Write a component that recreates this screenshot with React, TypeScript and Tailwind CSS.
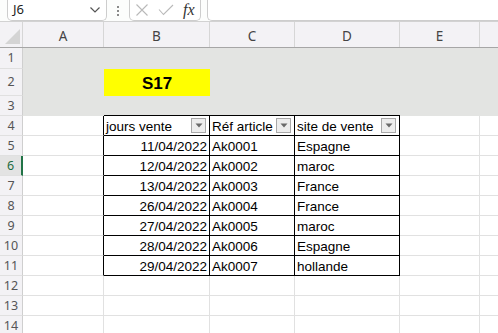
import React from "react";

const COLS = [81, 106, 85, 105, 80];
const LETTERS = ["A", "B", "C", "D", "E", ""];

const data = [
  ["11/04/2022", "Ak0001", "Espagne"],
  ["12/04/2022", "Ak0002", "maroc"],
  ["13/04/2022", "Ak0003", "France"],
  ["26/04/2022", "Ak0004", "France"],
  ["27/04/2022", "Ak0005", "maroc"],
  ["28/04/2022", "Ak0006", "Espagne"],
  ["29/04/2022", "Ak0007", "hollande"],
];

const cellFont = { fontFamily: '"Liberation Sans", Arial, sans-serif' };
const uiFont = { fontFamily: '"Noto Sans", "Open Sans", sans-serif' };

function FilterBtn() {
  return (
    <div className="absolute right-[3px] top-[2px] w-[15px] h-[15px] border border-[#a9a9a9] bg-[#ededed] flex items-center justify-center">
      <svg width="8" height="5" viewBox="0 0 8 5">
        <path d="M0.5 0.5 L7.5 0.5 L4 4.5 Z" fill="#6a6a6a" />
      </svg>
    </div>
  );
}

function RowHeader({ n, h, selected }: { n: number; h: number; selected?: boolean }) {
  return (
    <div
      className={
        "w-[23px] shrink-0 flex items-center justify-center text-[12.5px] pt-[1px] border-b border-[#e0e0e0] " +
        (selected
          ? "bg-[#e3e3e3] text-[#1d6b3e] border-r-2 border-r-[#217346]"
          : "bg-[#f3f2f5] text-[#555] border-r border-r-[#cfcfcf]")
      }
      style={{ ...uiFont, height: h }}
    >
      {n}
    </div>
  );
}

export default function App() {
  const rows: React.ReactNode[] = [];

  const grayRows = [
    { n: 1, h: 21 },
    { n: 2, h: 27 },
    { n: 3, h: 20 },
  ];
  grayRows.forEach(({ n, h }) => {
    rows.push(
      <div key={"r" + n} className="flex" style={{ height: h }}>
        <RowHeader n={n} h={h} />
        {COLS.map((w, ci) => {
          const isTableTop = n === 3 && ci >= 1 && ci <= 3;
          if (n === 2 && ci === 1) {
            return (
              <div
                key={ci}
                className="shrink-0 bg-[#ffff00] flex items-center justify-center font-bold text-[17px] text-black pt-[2px]"
                style={{ width: w, ...cellFont }}
              >
                S17
              </div>
            );
          }
          return (
            <div
              key={ci}
              className={"shrink-0 bg-[#e3e4e2] " + (isTableTop ? "border-b border-black" : "")}
              style={{ width: w }}
            />
          );
        })}
        <div className="flex-1 bg-[#e3e4e2]" />
      </div>
    );
  });

  const headers = ["jours vente", "Réf article", "site de vente"];
  rows.push(
    <div key="r4" className="flex h-[20px]">
      <RowHeader n={4} h={20} />
      {COLS.map((w, ci) => {
        const inTable = ci >= 1 && ci <= 3;
        const leftOfTable = ci === 0;
        return (
          <div
            key={ci}
            className={
              "shrink-0 relative bg-white border-b border-r text-[13.5px] text-black flex items-center pl-[2px] pt-[2px] " +
              (inTable ? "border-black" : leftOfTable ? "border-b-[#e1e1e1] border-r-black" : "border-[#e1e1e1]")
            }
            style={{ width: w, ...cellFont }}
          >
            {inTable ? (
              <>
                <span className="leading-none">{headers[ci - 1]}</span>
                <FilterBtn />
              </>
            ) : null}
          </div>
        );
      })}
      <div className="flex-1 bg-white border-b border-[#e1e1e1]" />
    </div>
  );

  data.forEach((d, di) => {
    const n = 5 + di;
    rows.push(
      <div key={"r" + n} className="flex h-[20px]">
        <RowHeader n={n} h={20} selected={n === 6} />
        {COLS.map((w, ci) => {
          const inTable = ci >= 1 && ci <= 3;
          const leftOfTable = ci === 0;
          return (
            <div
              key={ci}
              className={
                "shrink-0 bg-white border-b border-r text-[13.5px] text-black flex items-center pt-[2px] " +
                (ci === 1 ? "justify-end pr-[2px] " : "pl-[2px] ") +
                (inTable ? "border-black" : leftOfTable ? "border-b-[#e1e1e1] border-r-black" : "border-[#e1e1e1]")
              }
              style={{ width: w, ...cellFont }}
            >
              {inTable ? <span className="leading-none">{d[ci - 1]}</span> : null}
            </div>
          );
        })}
        <div className="flex-1 bg-white border-b border-[#e1e1e1]" />
      </div>
    );
  });

  [12, 13, 14].forEach((n) => {
    rows.push(
      <div key={"r" + n} className="flex h-[20px]">
        <RowHeader n={n} h={20} />
        {COLS.map((w, ci) => (
          <div key={ci} className="shrink-0 bg-white border-b border-r border-[#e1e1e1]" style={{ width: w }} />
        ))}
        <div className="flex-1 bg-white border-b border-[#e1e1e1]" />
      </div>
    );
  });

  return (
    <div className="w-[498px] h-[333px] overflow-hidden bg-white select-none">
      <div className="h-[22px] bg-[#fcfdfc] border-b border-[#d2d2d2] flex items-start">
        <div
          className="ml-[7px] w-[100px] h-[21px] bg-white border-x border-b border-[#cdcdcd] rounded-b-[5px] flex items-center justify-between pl-[5px] pr-[5px] text-[13px] text-[#222]"
          style={uiFont}
        >
          <span>J6</span>
          <svg width="12" height="8" viewBox="0 0 12 8">
            <path d="M1.5 1.5 L6 6 L10.5 1.5" fill="none" stroke="#555" strokeWidth="1.2" />
          </svg>
        </div>
        <div className="w-[22px] h-[21px] flex flex-col items-center justify-center gap-[2px]">
          <div className="w-[2px] h-[2px] bg-[#8a8a8a]" />
          <div className="w-[2px] h-[2px] bg-[#8a8a8a]" />
          <div className="w-[2px] h-[2px] bg-[#8a8a8a]" />
        </div>
        <div className="w-[72px] h-[21px] bg-white border-x border-b border-[#cdcdcd] rounded-b-[5px] flex items-center pl-[5px]">
          <svg width="14" height="14" viewBox="0 0 14 14">
            <path d="M1.5 1.5 L12.5 12.5 M12.5 1.5 L1.5 12.5" stroke="#b9b9b9" strokeWidth="1.1" fill="none" />
          </svg>
          <svg className="ml-[9px]" width="16" height="12" viewBox="0 0 16 12">
            <path d="M1 5.5 L5.5 10.5 L15 1" stroke="#b9b9b9" strokeWidth="1.1" fill="none" />
          </svg>
          <span
            className="ml-[9px] italic text-[16px] text-[#333] leading-none"
            style={{ fontFamily: '"Liberation Serif", "DejaVu Serif", serif' }}
          >
            fx
          </span>
        </div>
        <div className="ml-[6px] flex-1 h-[21px] bg-white border-l border-b border-[#cdcdcd] rounded-bl-[5px]" />
      </div>
      <div className="flex h-[26px] bg-[#f3f2f5] border-b border-[#a6a6a6]">
        <div className="w-[23px] shrink-0 relative border-r border-[#d6d6d6]">
          <svg className="absolute left-[5px] top-[7px]" width="15" height="15" viewBox="0 0 15 15">
            <path d="M15 0 L15 15 L0 15 Z" fill="#d4d4d4" />
          </svg>
        </div>
        {COLS.map((w, ci) => (
          <div
            key={ci}
            className="shrink-0 flex items-center justify-center text-[13.5px] text-[#444] border-r border-[#d6d6d6] pt-[3px]"
            style={{ width: w, ...uiFont }}
          >
            {LETTERS[ci]}
          </div>
        ))}
        <div className="flex-1" />
      </div>
      {rows}
    </div>
  );
}
